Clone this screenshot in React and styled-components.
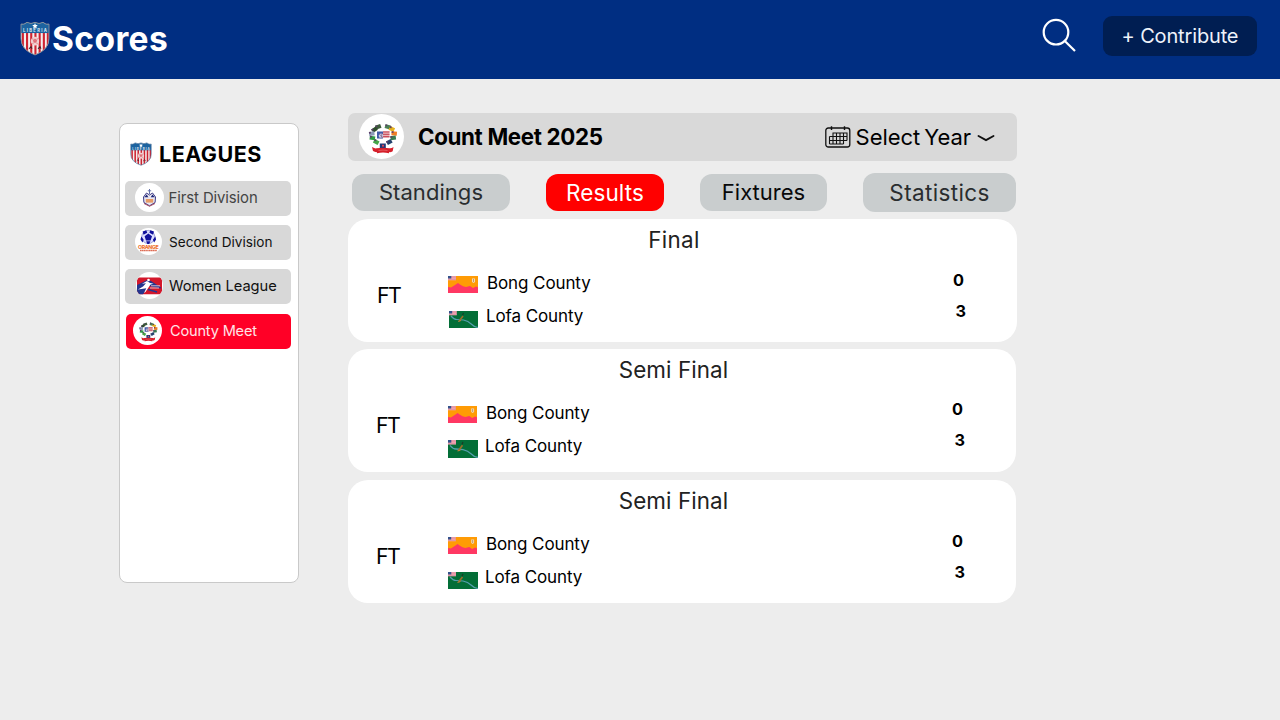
import React from "react";
import styled, { createGlobalStyle } from "styled-components";

const GlobalStyle = createGlobalStyle`
  * { box-sizing: border-box; }
  body {
    margin: 0;
    background: #ededed;
    color: #000;
    font-family: Inter, "Liberation Sans", sans-serif;
  }
  svg { display: block; flex: none; }
  h1, h2, h3, p, ul { margin: 0; padding: 0; }
`;

const Page = styled.div`
  height: 720px;
  overflow: hidden;
`;

/* Header */
const Header = styled.header`
  display: flex;
  align-items: flex-start;
  height: 79px;
  padding: 16px 23px 0 20px;
  background: #002e82;
  color: #fff;
`;

const Brand = styled.div`
  display: flex;
  align-items: flex-start;
  gap: 2px;
  padding-top: 5px;
  margin-right: auto;
`;

const BrandName = styled.h1`
  font-size: 33.5px;
  line-height: 36px;
  font-weight: 700;
  letter-spacing: 0.4px;
`;

const SearchButton = styled.button`
  width: 36px;
  height: 38px;
  margin: 1px 25px 0 0;
  padding: 0;
  border: 0;
  background: none;
  color: #fff;
`;

const ContributeButton = styled.button`
  width: 154px;
  height: 40px;
  padding: 0;
  border: 0;
  border-radius: 9px;
  background: #001e52;
  color: #eef3fb;
  font: 400 20px/41px Inter, sans-serif;
  letter-spacing: -0.15px;
`;

/* Body */
const Main = styled.main`
  display: flex;
  align-items: flex-start;
  padding: 34px 0 0 119px;
`;

const Sidebar = styled.aside`
  width: 180px;
  height: 460px;
  margin: 10px 49px 0 0;
  padding: 19px 7px 0 5px;
  border: 1px solid #c9c9c9;
  border-radius: 8px;
  background: #fff;
`;

const SidebarTitle = styled.div`
  display: flex;
  align-items: center;
  gap: 7px;
  height: 22px;
  padding-left: 5px;
`;

const SidebarHeading = styled.h2`
  font-size: 21.5px;
  line-height: 22px;
  font-weight: 700;
  letter-spacing: 0.5px;
`;

const LeagueList = styled.ul`
  display: flex;
  flex-direction: column;
  gap: 9px;
  margin-top: 16px;
  list-style: none;
`;

const League = styled.li`
  display: flex;
  align-items: center;
  height: 35px;
  margin-left: ${(p) => (p.$active ? "1px" : 0)};
  margin-top: ${(p) => (p.$active ? "1px" : 0)};
  padding-left: ${(p) => p.$inset}px;
  padding-bottom: 2px;
  border-radius: 5px;
  background: ${(p) => (p.$active ? "#ff0026" : "#d8d8d8")};
  color: ${(p) => p.$color};
`;

const LeagueBadge = styled.span`
  display: flex;
  flex: none;
  width: ${(p) => p.$size}px;
  height: ${(p) => p.$size}px;
  border-radius: 50%;
  background: #fff;
  overflow: hidden;
`;

const LeagueName = styled.span`
  margin-left: ${(p) => p.$gap}px;
  font-size: ${(p) => p.$size}px;
  line-height: 18px;
  letter-spacing: ${(p) => p.$track || 0}px;
  white-space: nowrap;
`;

const Content = styled.section`
  width: 669px;
`;

const Toolbar = styled.div`
  display: flex;
  align-items: center;
  height: 48px;
  padding: 0 22px 0 11px;
  border-radius: 7px;
  background: #d9d9d9;
`;

const CrestDisc = styled.span`
  width: 45px;
  height: 45px;
  margin-top: -1px;
  border-radius: 50%;
  background: #fff;
`;

const Competition = styled.h2`
  margin: 0 auto 0 14px;
  font-size: 22.3px;
  line-height: 28px;
  font-weight: 700;
  letter-spacing: -0.33px;
`;

const YearSelect = styled.div`
  display: flex;
  align-items: center;
  font-size: 22px;
  line-height: 28px;
`;

const YearLabel = styled.span`
  margin: 0 6px 0 5px;
  letter-spacing: -0.05px;
  word-spacing: -2px;
  white-space: nowrap;
`;

const Tabs = styled.nav`
  display: flex;
  align-items: center;
  justify-content: space-between;
  height: 39px;
  margin: 12px 1px 7px 4px;
`;

const Tab = styled.button`
  width: ${(p) => p.$width}px;
  height: ${(p) => p.$height || 37}px;
  padding: 0;
  border: 0;
  border-radius: 12px;
  background: ${(p) => (p.$active ? "#ff0000" : "#c9cdce")};
  color: ${(p) => p.$color};
  font: 400 ${(p) => p.$size || 22}px/37px Inter, sans-serif;
  letter-spacing: ${(p) => p.$track || 0}px;
`;

const Matches = styled.div`
  display: flex;
  flex-direction: column;
`;

const Card = styled.article`
  width: ${(p) => p.$width}px;
  height: 123px;
  margin-bottom: ${(p) => p.$after}px;
  border-radius: 20px;
  background: #fff;
`;

const Stage = styled.h3`
  height: 40px;
  padding-right: 17px;
  font-size: 22.4px;
  line-height: 41px;
  font-weight: 400;
  letter-spacing: ${(p) => p.$track}px;
  text-align: center;
  color: #222;
`;

const MatchBody = styled.div`
  display: flex;
  align-items: flex-start;
`;

const Status = styled.span`
  width: 71px;
  margin-left: ${(p) => p.$left}px;
  font-size: 21.4px;
  line-height: 73px;
  letter-spacing: -1.6px;
`;

const Teams = styled.div`
  display: flex;
  flex-direction: column;
  margin-right: auto;
  padding-top: 7px;
`;

const Team = styled.div`
  display: flex;
  align-items: center;
  height: 33px;
  font-size: 17px;
  letter-spacing: -0.1px;
`;

const FlagSlot = styled.span`
  display: flex;
  width: ${(p) => p.$slot}px;
  padding-top: ${(p) => p.$drop}px;
  padding-left: ${(p) => p.$left}px;
`;

const Scores = styled.div`
  display: flex;
  flex-direction: column;
  width: 64px;
  padding-top: ${(p) => p.$top}px;
`;

const Score = styled.strong`
  padding-left: ${(p) => p.$left}px;
  font-size: 16.3px;
  line-height: 31px;
  font-weight: 700;
`;

/* Artwork */
const Shield = ({ width, height, rim }) => (
  <svg width={width} height={height} viewBox="0 0 30 34" preserveAspectRatio="none">
    <clipPath id={"shield" + width}>
      <path d="M1 3Q4 4 7 1.3Q11 3.5 15 1.3Q19 3.5 23 1.3Q26 4 29 3V17Q29 28 15 33Q1 28 1 17Z" />
    </clipPath>
    <g clipPath={`url(#shield${width})`}>
      <rect width="30" height="34" fill="#f3eeee" />
      {[2, 6.2, 10.4, 14.6, 18.8, 23, 27].map((x) => (
        <rect key={x} x={x - 0.2} y="11" width="2.1" height="23" fill="#cf2331" />
      ))}
      <rect width="30" height="11.7" fill="#1c63a0" />
      <path d="M15 2l.8 1.8 2 .2-1.500 1.300.5 2-1.800-1-1.800 1 .5-2L12.200 4l2-.2z" fill="#fff" />
      <text x="15" y="11" textAnchor="middle" textLength="24" fontSize="4.2" fontWeight="700" fill="#dce8f3">LIBERIA</text>
      <circle cx="15" cy="19.500" r="4.200" fill="#efcfd0" />
      <path d="M15 17.500l1.600 1.200-.6 1.900h-2l-.6-1.900zM11.500 17l2 .8M18.500 17l-2 .8M12.500 22.500l1-1.500M17.500 22.500l-1-1.500" fill="#e27880" stroke="#dd5660" strokeWidth=".6" />
      <path d="M9 27l2-2 1 2M18 27l2-2 1 2" stroke="#45222a" strokeWidth="1" fill="none" />
    </g>
    <path d="M1 3Q4 4 7 1.3Q11 3.500 15 1.3Q19 3.500 23 1.3Q26 4 29 3V17Q29 28 15 33Q1 28 1 17Z" fill="none" stroke={rim} strokeWidth=".9" />
  </svg>
);

const SearchIcon = () => (
  <svg width="36" height="38" viewBox="0 0 36 38" fill="none" stroke="currentColor" strokeWidth="2.2">
    <circle cx="14" cy="15.200" r="12.300" />
    <path d="M22.800 24L33 34" />
  </svg>
);

const CalendarIcon = () => (
  <svg width="26" height="22" viewBox="0 0 26 22" fill="none" stroke="#111">
    <rect x=".8" y="2" width="24" height="19" rx="2.500" strokeWidth="1.300" />
    <path d="M6.500 .2V4M19.500 .2V4" strokeWidth="1.400" />
    <path d="M7.500 7H22V14.500M4.500 10.500H22M4.500 14.500H22M4.500 18H18.500M4.500 10.500V18M8 7V18M11.500 7V18M15 7V18M18.500 7V18" strokeWidth="1.100" />
  </svg>
);

const ChevronIcon = () => (
  <svg width="18" height="9" viewBox="0 0 18 9" fill="none" stroke="#111" strokeWidth="1.900" strokeLinecap="round" strokeLinejoin="round">
    <path d="M1.500 3L9 7.200L16.500 3" />
  </svg>
);

const crestFlags = [
  [19.3, 12.8, "#3d5b3c", -20], [15.5, 15.6, "#2e4d2c", -35], [12.8, 19.6, "#8c9bb8", -8],
  [13.4, 24, "#2f9a46", 8], [17.2, 28, "#45a548", 30], [28.7, 12.8, "#4c8054", 15],
  [32.8, 15, "#e6b31e", 25], [35.2, 19.4, "#f07c26", 5], [34.2, 23.8, "#3a7c50", -8],
  [30.3, 28, "#24436e", -30],
];

const CrestArt = ({ size }) => (
  <svg width={size} height={size} viewBox="0 0 45 45">
    {crestFlags.map(([x, y, fill, turn]) => (
      <g key={x} transform={`translate(${x} ${y}) rotate(${turn})`}>
        <rect x="-2.700" y="-2" width="5.400" height="4" fill={fill} />
        <rect x="-2.700" y="-2" width="1.900" height="1.700" fill="#5a3d68" />
      </g>
    ))}
    <rect x="18" y="17.500" width="6" height="7" fill="#3f59a8" />
    <rect x="24" y="17" width="6.500" height="7" fill="#e8b4b8" />
    <path d="M24 18h6.500M24 20.300h6.500M24 22.600h6.500" stroke="#c64252" strokeWidth="1" />
    <circle cx="22" cy="21.800" r="2.300" fill="#c9cbe2" />
    <path d="M20 20l4 3.500M22 24.500l1-5" stroke="#7d6387" strokeWidth=".7" />
    <rect x="20.800" y="29.500" width="6" height="4.500" fill="#1e3678" />
    <rect x="23" y="30.800" width="2" height="1.800" fill="#d5485a" />
    <path d="M13 33q3 1.800 4.500 1.300q6.500-1.300 13 0q2 .3 4-1.300l-.8 4.300q-2 1.200-3.700.8v1.200q-6-1.600-12 0v-1.200q-2 .2-4-1z" fill="#d6202b" />
    <path d="M19.500 36.500q4.500-.9 9 0" stroke="#ea7d82" strokeWidth=".6" fill="none" />
  </svg>
);

const FirstDivisionArt = () => (
  <svg width="29" height="29" viewBox="0 0 29 29">
    <path d="M14.500 6v5M12.800 7.800h3.400" stroke="#6470a8" strokeWidth="1" />
    <path d="M8.500 14l3-4 3 2 3-2 3 4-.4 5.500-5.600 3.300-5.600-3.300z" fill="#e9e6f1" stroke="#3e3d87" strokeWidth="1" />
    <path d="M9.300 14.200l2.400-2.700 1.700 2.700zM15.700 14.200l1.700-2.700 2.400 2.700z" fill="#1e2778" />
    <rect x="10.800" y="16" width="7.400" height="3.600" fill="#e69b66" />
    <path d="M9 20.500l5.500 2.700 5.500-2.700" stroke="#a44a61" strokeWidth="1" fill="none" />
  </svg>
);

const SecondDivisionArt = () => (
  <svg width="27" height="27" viewBox="0 0 27 27">
    <circle cx="13.300" cy="9" r="6.600" fill="#dcddff" stroke="#6970bd" strokeWidth=".6" />
    <path d="M13.300 5.500l3.700 2.700-1.400 4.200h-4.600l-1.400-4.200zM7.600 3.500l3.700-1.300.9 2.600-3.700 1.900zM19 3.500l-3.700-1.300-.9 2.600 3.700 1.900zM6.300 8.600l2.400 3.200-1.200 2.600-2-2.900zM20.300 8.600l-2.400 3.200 1.200 2.600 2-2.900zM11.200 13.200h4.200l-1.200 2.900h-1.900z" fill="#10109b" />
    <text x="13.300" y="21" textAnchor="middle" textLength="20.500" fontSize="5.200" fontWeight="800" fill="#ee7431">ORANGE</text>
    <path d="M5 22.500h17" stroke="#dd6c54" strokeWidth="1.300" strokeDasharray="1.500 .3" />
  </svg>
);

const WomenLeagueArt = () => (
  <svg width="27" height="27" viewBox="0 0 27 27">
    <rect x="1" y="5.500" width="25" height="16.800" rx="2.600" fill="#d3172b" />
    <path d="M1 13L11 8l4 1 10 6.500v1L13 14 7 22.300H3.500Q1 22.300 1 20z" fill="#24358e" />
    <path d="M2 17.500L7 14.500l3-3.300-4 .5 5-2.800 3 2 3.500.8-3 .8-2 3L9.500 20l-1.500 1 2.300-4.800z" fill="#fff" />
    <circle cx="12.500" cy="8" r="1.300" fill="#fff" />
    <path d="M15 13.800h9M14 16h9" stroke="#e5d1df" strokeWidth=".9" />
    <path d="M12 17.500L21 20" stroke="#24358e" strokeWidth="1.400" />
  </svg>
);

const Canton = () => (
  <g>
    <rect width="8" height="4.300" fill="#f1a2ad" />
    <path d="M3 1h5M0 3.400h8" stroke="#d98fa5" strokeWidth=".8" />
    <rect width="3.300" height="2.500" fill="#34528b" />
  </g>
);

const BongFlag = ({ width }) => (
  <svg width={width} height="17" viewBox="0 0 30 17" preserveAspectRatio="none">
    <rect width="30" height="17" fill="#ff9b05" />
    <path d="M0 11l3 .5 4-2.500 3-2 2 1.500 3 1.800 3 .7 4-1 3 2 3-1.500 2 .8V17H0z" fill="#ff3863" />
    <path d="M24 2.500h3v3.500l-1.500 1-1.500-1z" fill="#f0dcb8" />
    <path d="M25.500 3v3" stroke="#b07b4d" strokeWidth=".7" />
    <Canton />
  </svg>
);

const LofaFlag = ({ width, height }) => (
  <svg width={width} height={height} viewBox="0 0 30 17" preserveAspectRatio="none">
    <rect width="30" height="17" fill="#036e37" />
    <path d="M2 5q3 3.500 6 3.500t7 .5q5 1 8 4t7 3.500" fill="none" stroke="#559fae" strokeWidth="1.200" />
    <path d="M10.500 10l4-5" stroke="#9a6d28" strokeWidth="1.700" />
    <path d="M14 4l1-2" stroke="#1d3826" strokeWidth="1.200" />
    <path d="M9.500 10.500l3-1" stroke="#c08039" strokeWidth="1" />
    <Canton />
  </svg>
);

const leagues = [
  { name: "First Division", inset: 10, badge: 29, gap: 4.6, size: 14.9, track: -0.1, color: "#444", art: <FirstDivisionArt /> },
  { name: "Second Division", inset: 10, badge: 27, gap: 7, size: 13.6, track: 0, color: "#111", art: <SecondDivisionArt /> },
  { name: "Women League", inset: 11, badge: 27, gap: 6, size: 14.7, track: -0.05, color: "#111", art: <WomenLeagueArt /> },
  { name: "County Meet", inset: 7, badge: 29, gap: 8, size: 14.6, track: -0.2, color: "#ffe3e6", active: true, art: <CrestArt size={29} /> },
];

const matches = [
  { id: 1, stage: "Final", width: 669, after: 7, shift: 0, track: 0.35, scoreTop: 5.5, bong: 30, lofa: 29, lofaHeight: 17, lofaDrop: 8 },
  { id: 2, stage: "Semi Final", width: 668, after: 8, shift: -1, track: 0.1, scoreTop: 5, bong: 29, lofa: 30, lofaHeight: 18, lofaDrop: 7 },
  { id: 3, stage: "Semi Final", width: 668, after: 0, shift: -1, track: 0.1, scoreTop: 6, bong: 29, lofa: 30, lofaHeight: 17, lofaDrop: 8 },
];

const MatchCard = ({ match }) => (
  <Card $width={match.width} $after={match.after}>
    <Stage $track={match.track}>{match.stage}</Stage>
    <MatchBody>
      <Status $left={29 + match.shift}>FT</Status>
      <Teams>
        <Team>
          <FlagSlot $slot={39} $drop={4} $left={match.shift ? 1 : 0}><BongFlag width={match.bong} /></FlagSlot>
          Bong County
        </Team>
        <Team>
          <FlagSlot $slot={38} $drop={match.lofaDrop} $left={1}><LofaFlag width={match.lofa} height={match.lofaHeight} /></FlagSlot>
          Lofa County
        </Team>
      </Teams>
      <Scores $top={match.scoreTop}>
        <Score $left={0}>0</Score>
        <Score $left={2.5}>3</Score>
      </Scores>
    </MatchBody>
  </Card>
);

export default function App() {
  return (
    <Page>
      <GlobalStyle />
      <Header>
        <Brand>
          <Shield width={30} height={35} rim="#8d9299" />
          <BrandName>Scores</BrandName>
        </Brand>
        <SearchButton aria-label="Search"><SearchIcon /></SearchButton>
        <ContributeButton>+ Contribute</ContributeButton>
      </Header>
      <Main>
        <Sidebar>
          <SidebarTitle>
            <Shield width={22} height={24} rim="#466f99" />
            <SidebarHeading>LEAGUES</SidebarHeading>
          </SidebarTitle>
          <LeagueList>
            {leagues.map((l) => (
              <League key={l.name} $active={l.active} $inset={l.inset} $color={l.color}>
                <LeagueBadge $size={l.badge}>{l.art}</LeagueBadge>
                <LeagueName $gap={l.gap} $size={l.size} $track={l.track}>{l.name}</LeagueName>
              </League>
            ))}
          </LeagueList>
        </Sidebar>
        <Content>
          <Toolbar>
            <CrestDisc><CrestArt size={45} /></CrestDisc>
            <Competition>Count Meet 2025</Competition>
            <YearSelect>
              <CalendarIcon />
              <YearLabel>Select Year</YearLabel>
              <ChevronIcon />
            </YearSelect>
          </Toolbar>
          <Tabs>
            <Tab $width={158} $color="#2a2d2f" $track={0.05}>Standings</Tab>
            <Tab $width={118} $color="#fff" $active $size={22.5} $track={0.1}>Results</Tab>
            <Tab $width={127} $color="#08090a">Fixtures</Tab>
            <Tab $width={153} $height={39} $color="#2a2d2f" $size={22.5} $track={0.35}>Statistics</Tab>
          </Tabs>
          <Matches>
            {matches.map((m) => <MatchCard key={m.id} match={m} />)}
          </Matches>
        </Content>
      </Main>
    </Page>
  );
}
